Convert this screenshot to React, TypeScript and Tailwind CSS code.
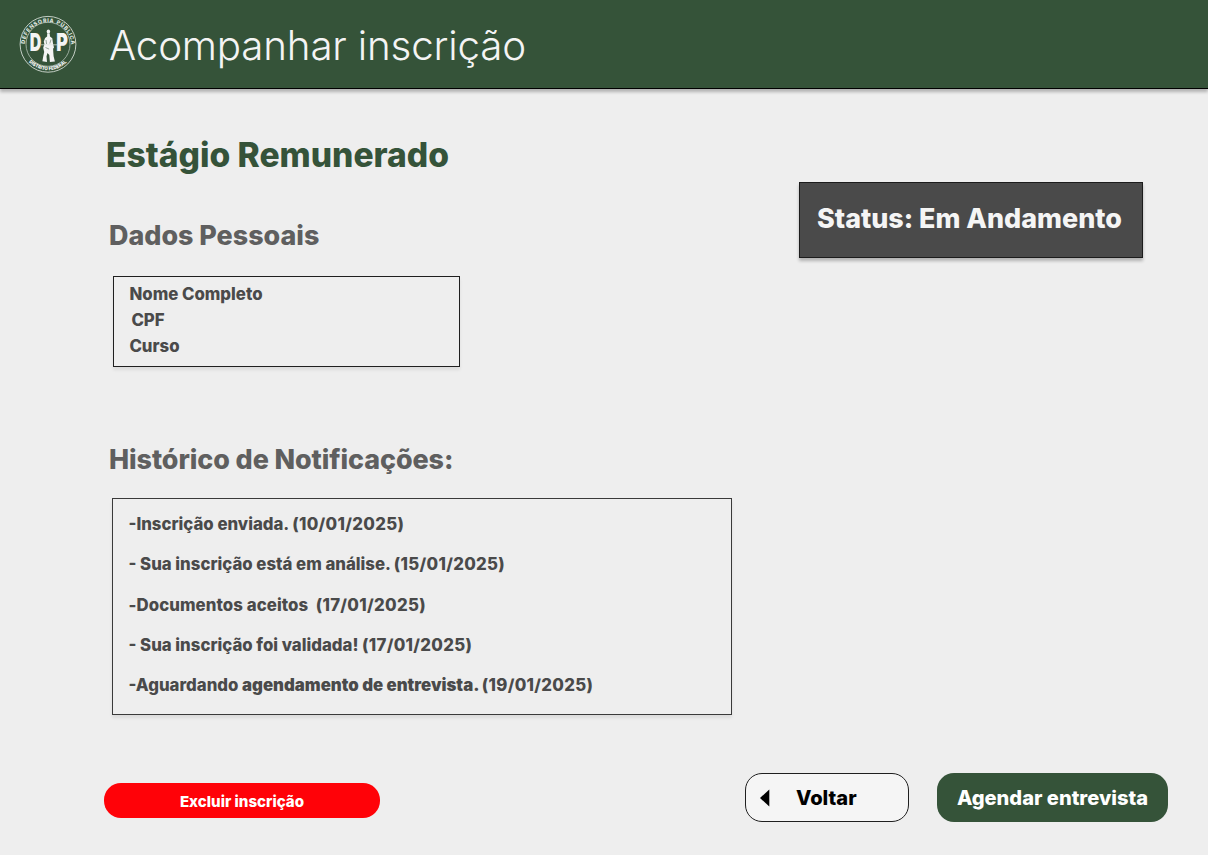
type Notification = { text: string; strong?: string; date: string };

const personalData = [
  { label: "Nome Completo", indent: false },
  { label: "CPF", indent: true },
  { label: "Curso", indent: false },
];

const notifications: Notification[] = [
  { text: "-Inscrição enviada. ", date: "(10/01/2025)" },
  { text: "- Sua inscrição está em análise. ", date: "(15/01/2025)" },
  { text: "-Documentos aceitos  ", date: "(17/01/2025)" },
  { text: "- Sua inscrição foi validada! ", date: "(17/01/2025)" },
  { text: "-Aguardando ", strong: "agendamento de entrevista. ", date: "(19/01/2025)" },
];

function Logo() {
  return (
    <svg viewBox="0 0 60 60" className="h-[60px] w-[60px] shrink-0" role="img" aria-label="Defensoria Pública">
      <defs>
        <path id="arc-top" d="M6.8 31.5 A23.2 23.2 0 1 1 53.2 31.5" />
        <path id="arc-bottom" d="M10.6 47.6 A26.2 26.2 0 0 0 49.4 47.6" />
      </defs>
      <circle cx="30" cy="30.3" r="27.9" fill="none" stroke="#d3dbd4" strokeWidth="0.9" />
      <circle cx="30" cy="30.3" r="22" fill="none" stroke="#b4c1b6" strokeWidth="0.8" />
      <text fill="#dfe6e0" fontSize="5.4" fontWeight="800" textLength="70" lengthAdjust="spacing">
        <textPath href="#arc-top" startOffset="1.5">DEFENSORIA PÚBLICA</textPath>
      </text>
      <text fill="#f0f3f0" fontSize="4.9" fontWeight="900" textLength="42" lengthAdjust="spacingAndGlyphs">
        <textPath href="#arc-bottom" startOffset="0.5">DISTRITO FEDERAL</textPath>
      </text>
      <text x="11.7" y="37" fill="#f4f4f4" fontSize="24.5" fontWeight="900" textLength="11.6" lengthAdjust="spacingAndGlyphs">D</text>
      <text x="38.2" y="37" fill="#f4f4f4" fontSize="24.5" fontWeight="900" textLength="11.6" lengthAdjust="spacingAndGlyphs">P</text>
      <g fill="#f4f4f4">
        <ellipse cx="30.4" cy="17.6" rx="1.7" ry="2.2" />
        <path d="M29.2 19.4h2.5l.3 3.2 2.3 1.6.7 5.2 1 4-.9 1.3.2 3.6.3 4 1.3 5.1-5 .7-.6-7-1.8-2-1 3.2.5 5.6-4.6-.7.8-4.6 1-4.5-1-4.4 1.2-3.4-.6-2.8 1.3-3.5 2-1.5z" />
      </g>
      <path d="M23 30.8h16" stroke="#dbe2dc" strokeWidth="0.7" />
      <path d="M27.5 33.5l3.6 1.6M33 25.5l-1.2 4M28 26l.6 4" fill="none" stroke="#6d8570" strokeWidth="0.7" />
    </svg>
  );
}

export default function App() {
  return (
    <div className="flex h-[855px] w-[1208px] flex-col overflow-hidden bg-[#eeeeee] font-['Inter',sans-serif] text-[16.8px] font-extrabold text-[#4a4a4a]">
      <header className="flex h-[89px] shrink-0 items-center border-b border-black bg-[#355339] pl-[18px] shadow-[0_3px_3px_rgba(0,0,0,0.25)]">
        <Logo />
        <h1 className="ml-[31px] mt-1 text-[40.3px] font-light leading-[48px] tracking-[-0.17px] text-[#f4f4f4]">Acompanhar inscrição</h1>
      </header>

      <main className="flex grow flex-col">
        <div className="flex h-[354px] shrink-0 justify-between pl-[106px] pr-[65px]">
          <section>
            <h2 className="mt-[45px] text-[33.6px] leading-[41px] text-[#355339]">Estágio Remunerado</h2>
            <h3 className="ml-[3px] mt-11 text-[26.9px] leading-8 text-[#5f5f5f]">Dados Pessoais</h3>
            <div className="ml-[7px] mt-[25px] h-[91px] w-[347px] border border-[#1f1f1f] pl-[15.4px] pt-1 leading-[26px] shadow-[0_3px_3px_rgba(0,0,0,0.08)]">
              {personalData.map(({ label, indent }) => (
                <p key={label} className={indent ? "pl-[2px]" : ""}>{label}</p>
              ))}
            </div>
          </section>

          <div className="mt-[93px] h-[76px] w-[344px] border border-[#1c1c1c] bg-[#4a4a4a] pl-[17px] pt-[19px] text-[26.9px] leading-8 text-[#f5f5f5] shadow-[0_3px_3px_rgba(0,0,0,0.25)]">
            Status: Em Andamento
          </div>
        </div>

        <section className="pl-[109px]">
          <h3 className="text-[26.9px] leading-8 tracking-[-0.08px] text-[#5f5f5f]">Histórico de Notificações:</h3>
          <ul className="ml-[3px] mt-[23px] h-[217px] w-[620px] border border-[#3a3a3a] pl-[15.5px] pt-[5px] leading-[40.3px] shadow-[0_3px_3px_rgba(0,0,0,0.08)]">
            {notifications.map(({ text, strong, date }) => (
              <li key={text} className="whitespace-pre">
                <span className={text.startsWith("-Documentos") ? "tracking-[0.08px]" : ""}>{text}</span>
                {strong && <strong className="font-black">{strong}</strong>}
                <span className="tracking-[0.3px]">{date}</span>
              </li>
            ))}
          </ul>
        </section>

        <footer className="mt-[58px] flex items-start pl-[104px] pr-10 leading-6">
          <button className="mt-[10px] h-[35px] w-[276px] rounded-[17px] bg-[#ff0208] pt-[2px] text-[15.1px] text-white">Excluir inscrição</button>
          <button className="ml-auto flex h-[49px] w-[164px] items-center rounded-[17px] border border-[#1f1f1f] bg-[#f5f5f5] pl-[14px] text-[20.1px] text-black">
            <svg viewBox="0 0 10 18" className="mr-[26px] h-[18px] w-[10px]" aria-hidden="true">
              <path d="M9.3.5v17L0 9z" fill="currentColor" />
            </svg>
            Voltar
          </button>
          <button className="ml-7 h-[49px] w-[231px] rounded-[17px] bg-[#355339] text-[20.1px] text-white">Agendar entrevista</button>
        </footer>
      </main>
    </div>
  );
}
